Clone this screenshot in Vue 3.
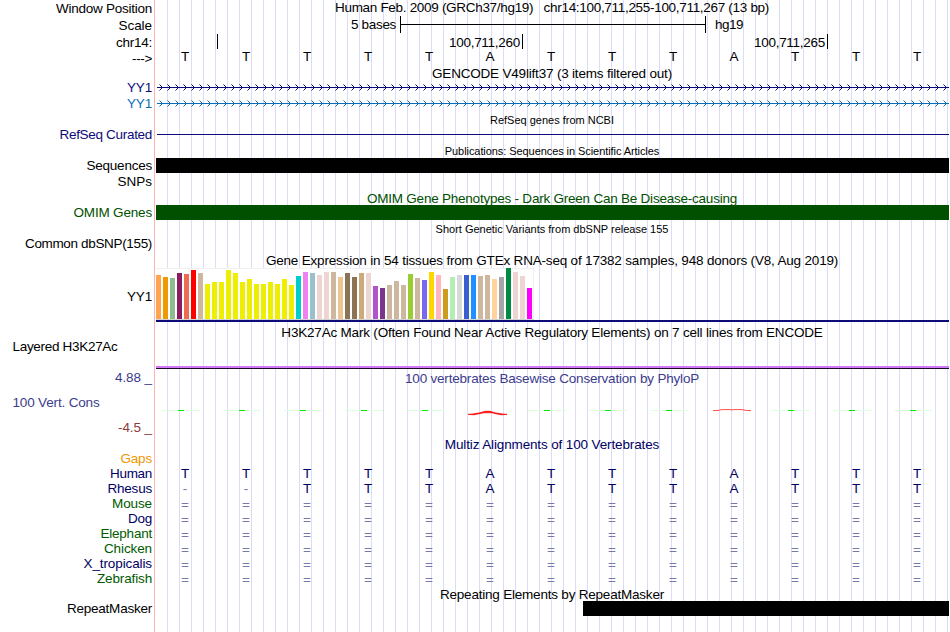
<template>
  <div class="browser">
    <div class="labels">
      <div
        v-for="(label, i) in labels"
        :key="i"
        class="label"
        :class="[label.tone, { left: label.left }]"
        :style="{ height: label.height + 'px' }"
      >
        <span :style="fit(label.text, label.width)">{{ label.text }}</span>
      </div>
    </div>

    <div class="tracks">
      <div class="title position"><span :style="fit(position, 434)">{{ position }}</span></div>

      <div class="scale">
        <span class="scale-size" :style="fit('5 bases', 45)">5 bases</span>
        <div class="bracket"></div>
        <span class="scale-db" :style="fit('hg19', 28)">hg19</span>
      </div>
      <div class="ruler">
        <div class="tick first"></div>
        <div v-for="pos in ['100,711,260', '100,711,265']" :key="pos" class="tick">
          <span :style="fit(pos, 71)">{{ pos }}</span>
        </div>
      </div>
      <div class="bases">
        <span v-for="(base, i) in sequence" :key="i">{{ base }}</span>
      </div>

      <div class="title gencode"><span :style="fit(titles.gencode, 240)">{{ titles.gencode }}</span></div>
      <svg v-for="tone in ['navy', 'blue']" :key="tone" class="gene" :class="tone" width="793" height="16">
        <path class="intron" d="M1 6.5H793" />
        <path class="arrows" :d="arrows" />
      </svg>

      <div class="title small refseq"><span :style="fit(titles.refseq, 124, 11)">{{ titles.refseq }}</span></div>
      <div class="refseq-line"></div>

      <div class="title small pubs"><span :style="fit(titles.pubs, 215, 11)">{{ titles.pubs }}</span></div>
      <div class="bar pubs-bar"></div>

      <div class="title omim"><span :style="fit(titles.omim, 370)">{{ titles.omim }}</span></div>
      <div class="bar omim-bar"></div>

      <div class="title small snp"><span :style="fit(titles.snp, 233, 11)">{{ titles.snp }}</span></div>

      <div class="title gtex"><span :style="fit(titles.gtex, 573)">{{ titles.gtex }}</span></div>
      <div class="gtex-track">
        <div class="gtex-chart">
          <div
            v-for="(bar, i) in tissues"
            :key="i"
            class="tissue"
            :style="{ height: bar[0] + 'px', background: bar[1] }"
          ></div>
        </div>
      </div>

      <div class="title h3k"><span :style="fit(titles.h3k, 542)">{{ titles.h3k }}</span></div>
      <div class="h3k-signal"></div>

      <div class="title phylop"><span :style="fit(titles.phylop, 294)">{{ titles.phylop }}</span></div>
      <svg class="conservation" width="793" height="48">
        <g v-for="x in neutral" :key="x">
          <path class="faint" :d="`M${x - 19} 24.5h38`" />
          <path class="score" :d="`M${x - 3} 24.5h6`" />
        </g>
        <path class="negative" d="M312 28.4L317 27.9L324 26.8L329 25.3H334L339 26.8L346 27.9L351 28.4L345 28.8L334 26.5H329L318 28.8Z" />
        <path class="inner" d="M326 27.5H338" />
        <path class="slight" d="M557 24.6L562 24.4L566 23.6H574L576 23.9L578 23.6H586L590 24.4L595 24.6" />
      </svg>

      <div class="title multiz"><span :style="fit(titles.multiz, 215)">{{ titles.multiz }}</span></div>
      <div class="alignment">
        <div v-for="(row, i) in alignment" :key="i" class="bases" :class="{ unaligned: i > 1 }">
          <span v-for="(base, j) in row" :key="j" :class="{ gap: '=-'.includes(base) }">{{ base }}</span>
        </div>
      </div>

      <div class="title rmsk"><span :style="fit(titles.rmsk, 224)">{{ titles.rmsk }}</span></div>
      <div class="bar rmsk-bar"></div>
    </div>
  </div>
</template>

<script setup>
const ctx = document.createElement('canvas').getContext('2d');

// spread the letters so a text takes the given width
const fit = (text, width, size = 13.5) => {
  ctx.font = `${size}px "Liberation Sans"`;
  const spacing = (width - ctx.measureText(text).width) / text.length;
  return { letterSpacing: spacing.toFixed(3) + 'px' };
};

const labels = [
  { text: 'Window Position', height: 16, width: 96 },
  { text: 'Scale', height: 17, width: 33.5 },
  { text: 'chr14:', height: 17, width: 36 },
  { text: '--->', height: 16, width: 20 },
  { text: 'YY1', height: 29, width: 25, tone: 'navy' },
  { text: 'YY1', height: 16, width: 25, tone: 'blue' },
  { text: 'RefSeq Curated', height: 31, width: 92.5, tone: 'navy' },
  { text: 'Sequences', height: 31, width: 65.5 },
  { text: 'SNPs', height: 16, width: 34.5 },
  { text: 'OMIM Genes', height: 31, width: 78.5, tone: 'omim' },
  { text: 'Common dbSNP(155)', height: 31, width: 127 },
  { text: 'YY1', height: 53, width: 25 },
  { text: 'Layered H3K27Ac', height: 50, width: 105, left: true },
  { text: '4.88 _', height: 31, width: 37, tone: 'cons' },
  { text: '100 Vert. Cons', height: 25, width: 87, tone: 'cons', left: true },
  { text: '-4.5 _', height: 25, width: 34, tone: 'cons-low' },
  { text: 'Gaps', height: 31, width: 31.5, tone: 'gaps' },
  { text: 'Human', height: 15, width: 42, tone: 'species' },
  { text: 'Rhesus', height: 15, width: 44.5, tone: 'species' },
  { text: 'Mouse', height: 15, width: 40, tone: 'species-alt' },
  { text: 'Dog', height: 15, width: 24, tone: 'species' },
  { text: 'Elephant', height: 15, width: 51.5, tone: 'species-alt' },
  { text: 'Chicken', height: 15, width: 48, tone: 'species-alt' },
  { text: 'X_tropicalis', height: 15, width: 68.5, tone: 'species' },
  { text: 'Zebrafish', height: 15, width: 55, tone: 'species-alt' },
  { text: 'RepeatMasker', height: 30, width: 85 }
];

const position = 'Human Feb. 2009 (GRCh37/hg19)\u00a0\u00a0 chr14:100,711,255-100,711,267 (13 bp)';

const titles = {
  gencode: 'GENCODE V49lift37 (3 items filtered out)',
  refseq: 'RefSeq genes from NCBI',
  pubs: 'Publications: Sequences in Scientific Articles',
  omim: 'OMIM Gene Phenotypes - Dark Green Can Be Disease-causing',
  snp: 'Short Genetic Variants from dbSNP release 155',
  gtex: 'Gene Expression in 54 tissues from GTEx RNA-seq of 17382 samples, 948 donors (V8, Aug 2019)',
  h3k: 'H3K27Ac Mark (Often Found Near Active Regulatory Elements) on 7 cell lines from ENCODE',
  phylop: '100 vertebrates Basewise Conservation by PhyloP',
  multiz: 'Multiz Alignments of 100 Vertebrates',
  rmsk: 'Repeating Elements by RepeatMasker'
};

const sequence = 'TTTTTATTTATTT';
const alignment = [sequence, '--TTTATTTATTT', ...Array(6).fill('=============')];

// strand arrows, one every 8px
const arrows = Array.from({ length: 99 }, (_, i) => `M${3.5 + i * 8} 3.5l3 3l-3 3`).join('');

// bases with a score close to zero
const neutral = [0, 1, 2, 3, 4, 6, 7, 8, 10, 11, 12].map((i) => 25 + i * 61);

// [bar height, tissue color]
const tissues = [
  [44, '#ffa54f'],
  [42, '#ee9a00'],
  [41, '#8fbc8f'],
  [46, '#8b1c62'],
  [45, '#ee6a50'],
  [49, '#ff0000'],
  [46, '#cdb79e'],
  ...[35, 37, 37, 49, 46, 37, 40, 35, 35, 37, 35, 40, 34].map((h) => [h, '#eeee00']),
  [43, '#00cdcd'],
  [47, '#ee82ee'],
  [46, '#9ac0cd'],
  [44, '#eed5d2'],
  [47, '#eed5d2'],
  [47, '#cdb79e'],
  [42, '#eec591'],
  [46, '#8b7355'],
  [42, '#8b7355'],
  [46, '#cdaa7d'],
  [46, '#eed5d2'],
  [33, '#b452cd'],
  [31, '#7a378b'],
  [34, '#cdb79e'],
  [38, '#cdb79e'],
  [34, '#cdb79e'],
  [45, '#9acd32'],
  [41, '#cdb79e'],
  [39, '#7a67ee'],
  [47, '#ffd700'],
  [44, '#ffb6c1'],
  [30, '#cd9b1d'],
  [42, '#b4eeb4'],
  [44, '#d9d9d9'],
  [44, '#3a5fcd'],
  [44, '#1e90ff'],
  [43, '#cdb79e'],
  [44, '#cdb79e'],
  [40, '#ffd39b'],
  [42, '#a6a6a6'],
  [51, '#008b45'],
  [47, '#eed5d2'],
  [43, '#eed5d2'],
  [31, '#ff00ff']
];
</script>

<style>
body {
  background: #fff;
}
</style>

<style scoped>
.browser {
  display: flex;
  width: 949px;
  height: 632px;
  overflow: hidden;
  font: 13.5px/15px 'Liberation Sans', sans-serif;
  color: #000;
  white-space: nowrap;
}

.labels {
  box-sizing: border-box;
  width: 155px;
  flex: none;
  border-right: 1px solid #ffb4b4;
}

.label {
  display: flex;
  align-items: flex-end;
  justify-content: flex-end;
  padding-right: 2px;
}

.label.left {
  justify-content: flex-start;
  padding-left: 12.5px;
}

.navy {
  color: #0c0c78;
}

.blue {
  color: #0c6eb4;
}

.omim {
  color: #005000;
}

.cons {
  color: #3c3c8c;
}

.cons-low {
  color: #8c3c3c;
}

.gaps {
  color: #f09600;
}

.species {
  color: #000064;
}

.species-alt {
  color: #005a00;
}

/* guide lines every 12px */
.tracks {
  box-sizing: border-box;
  width: 794px;
  padding-left: 1px;
  background: linear-gradient(to right, #dcdcf8 1px, transparent 1px) 11px 0 / 12px 100%;
  background-origin: content-box;
  background-clip: content-box;
}

.title {
  display: flex;
  align-items: flex-end;
  justify-content: center;
  padding-right: 1px;
}

.small {
  font-size: 11px;
  line-height: 12px;
}

.position {
  height: 15px;
  margin-bottom: 1px;
}

.scale {
  display: flex;
  height: 17px;
  margin-bottom: 1px;
  padding-left: 195px;
  line-height: 17px;
}

.scale-size {
  width: 49px;
}

.bracket {
  width: 304px;
  border: solid #000;
  border-width: 0 1px;
  background: linear-gradient(#000, #000) 0 8px / 100% 1px no-repeat;
}

.scale-db {
  margin-left: 9px;
}

.ruler {
  display: flex;
  height: 15px;
}

.tick {
  box-sizing: border-box;
  width: 305px;
  padding-right: 2px;
  border-right: 1px solid #000;
  line-height: 17px;
  text-align: right;
}

.tick.first {
  width: 62px;
}

.bases {
  display: grid;
  grid-template-columns: repeat(13, 61px);
  height: 15px;
  margin-left: -1.5px;
  text-align: center;
}

.gencode {
  height: 17px;
}

.gene {
  display: block;
}

.intron {
  stroke: currentColor;
  shape-rendering: crispEdges;
}

.arrows {
  fill: none;
  stroke: currentColor;
}

.refseq {
  height: 13px;
}

.refseq-line {
  height: 1px;
  margin-top: 8px;
  margin-left: 1px;
  background: #0c0c78;
}

.pubs {
  height: 22px;
}

.bar {
  position: relative;
  height: 15px;
  background: #000;
}

.pubs-bar {
  margin-top: 1px;
}

.title.omim {
  height: 33px;
}

.omim-bar {
  margin-top: -1px;
  background: #005000;
}

.snp {
  height: 15px;
}

.gtex {
  height: 33px;
}

.gtex-track {
  border-bottom: 2px solid #0c0c78;
}

.gtex-chart {
  box-sizing: border-box;
  display: flex;
  align-items: flex-end;
  gap: 2px;
  width: 378px;
  height: 52px;
  background: #fff;
  border-bottom: 1px solid #d2d2d2;
  box-shadow: inset 0 1px #f0f0f0, inset -1px 0 #f0f0f0;
}

.tissue {
  width: 5px;
}

.h3k {
  height: 18px;
}

.h3k-signal {
  height: 2px;
  margin-top: 26px;
  background: #d278fa;
  border-bottom: 1px solid #1e0a28;
}

.phylop {
  height: 17px;
  color: #3c3c8c;
}

.conservation {
  display: block;
}

.faint {
  stroke: #dcffdc;
}

.score {
  stroke: #00f000;
}

.negative {
  fill: #f00;
  stroke: #f00;
  stroke-width: 0.7;
}

.inner {
  stroke: #ffb4b4;
  stroke-width: 0.6;
}

.slight {
  fill: none;
  stroke: #ff3c3c;
  stroke-width: 0.9;
}

.multiz {
  height: 18px;
  color: #000064;
}

.alignment {
  margin-top: 14px;
  color: #000064;
}

.unaligned {
  line-height: 17px;
}

.gap {
  color: #7878aa;
}

.rmsk {
  height: 16px;
}

.rmsk-bar {
  margin-top: -1px;
  margin-left: 427px;
}
</style>
